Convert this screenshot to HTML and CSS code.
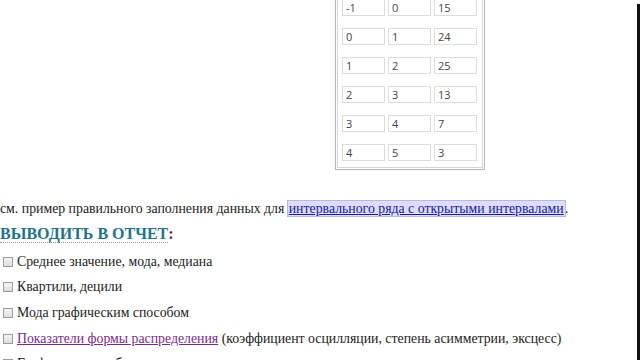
FILE: index.html
```html
<!DOCTYPE html>
<html lang="ru">
<head>
  <meta charset="UTF-8">
  <meta name="viewport" content="width=device-width, initial-scale=1.0">
  <title>Интервальный ряд</title>
  <link rel="stylesheet" href="styles.css">
</head>
<body>
  <div id="root">
    <div class="table-box">
      <div class="row"><input class="cell" value="-1"><input class="cell" value="0"><input class="cell" value="15"></div>
      <div class="row"><input class="cell" value="0"><input class="cell" value="1"><input class="cell" value="24"></div>
      <div class="row"><input class="cell" value="1"><input class="cell" value="2"><input class="cell" value="25"></div>
      <div class="row"><input class="cell" value="2"><input class="cell" value="3"><input class="cell" value="13"></div>
      <div class="row"><input class="cell" value="3"><input class="cell" value="4"><input class="cell" value="7"></div>
      <div class="row"><input class="cell" value="4"><input class="cell" value="5"><input class="cell" value="3"></div>
    </div>

    <p class="hint">см. пример правильного заполнения данных для <a href="#" class="hint-link">интервального ряда с открытыми интервалами</a>.</p>

    <h2 class="report"><span class="report-title">ВЫВОДИТЬ В ОТЧЕТ</span>:</h2>

    <label class="opt"><input type="checkbox" class="check">Среднее значение, мода, медиана</label>
    <label class="opt"><input type="checkbox" class="check">Квартили, децили</label>
    <label class="opt"><input type="checkbox" class="check">Мода графическим способом</label>
    <label class="opt"><input type="checkbox" class="check"><a href="#" class="visited">Показатели формы распределения</a>&nbsp;(коэффициент осцилляции, степень асимметрии, эксцесс)</label>
    <label class="opt"><input type="checkbox" class="check">Графическое изображение ряда распределения</label>
  </div>
  <div class="frame-edge"></div>
</body>
</html>
```

FILE: styles.css
```css
*{margin: 0; padding: 0; box-sizing: border-box;}

body{
  width: 640px;
  height: 360px;
  overflow: hidden;
  background: #fff;
  font-family: "Liberation Serif", "DejaVu Serif", serif;
  font-size: 13.8px;
  color: #222;
  position: relative;
}

.table-box{
  width: 150px;
  margin-left: 335px;
  margin-top: -8px;
  padding: 6px 6px 8px 6px;
  border: 1px solid #b5b5b5;
  box-shadow: inset 0 0 0 1px #fff, inset 0 0 0 2px #d6d6d6;
  display: flex;
  flex-direction: column;
  gap: 12px;
}

.row{
  display: flex;
  gap: 3px;
}

.cell{
  width: 43px;
  height: 17px;
  border: 1px solid #dcdcdc;
  background: #fff;
  padding-left: 3px;
  font-family: "Open Sans", "DejaVu Sans", sans-serif;
  font-size: 11px;
  color: #444;
}

.hint{
  margin-top: 31px;
  line-height: 16px;
  white-space: nowrap;
}

.hint-link{
  color: #1a1a9a;
  background: #dcdcff;
  outline: 1px solid #b8b8d8;
  padding: 0 1px;
}

.report{
  margin-top: 8px;
  font-size: 16px;
  line-height: 18px;
  font-weight: bold;
  color: #333;
}

.report-title{
  color: #23728c;
  border-bottom: 1px dotted #999;
}

.opt{
  display: flex;
  align-items: center;
  height: 25.6px;
  white-space: nowrap;
}

.opt:first-of-type{
  margin-top: 6px;
}

.check{
  width: 10px;
  height: 10px;
  margin: 0 4px 0 3px;
  appearance: none;
  border: 1px solid #9c9c9c;
  background: linear-gradient(#f4f4f4, #dedede);
}

.visited{
  color: #7a2a8a;
}

.frame-edge{
  position: absolute;
  right: 0;
  top: 4px;
  width: 3px;
  bottom: 0;
  background: #111;
}
```
